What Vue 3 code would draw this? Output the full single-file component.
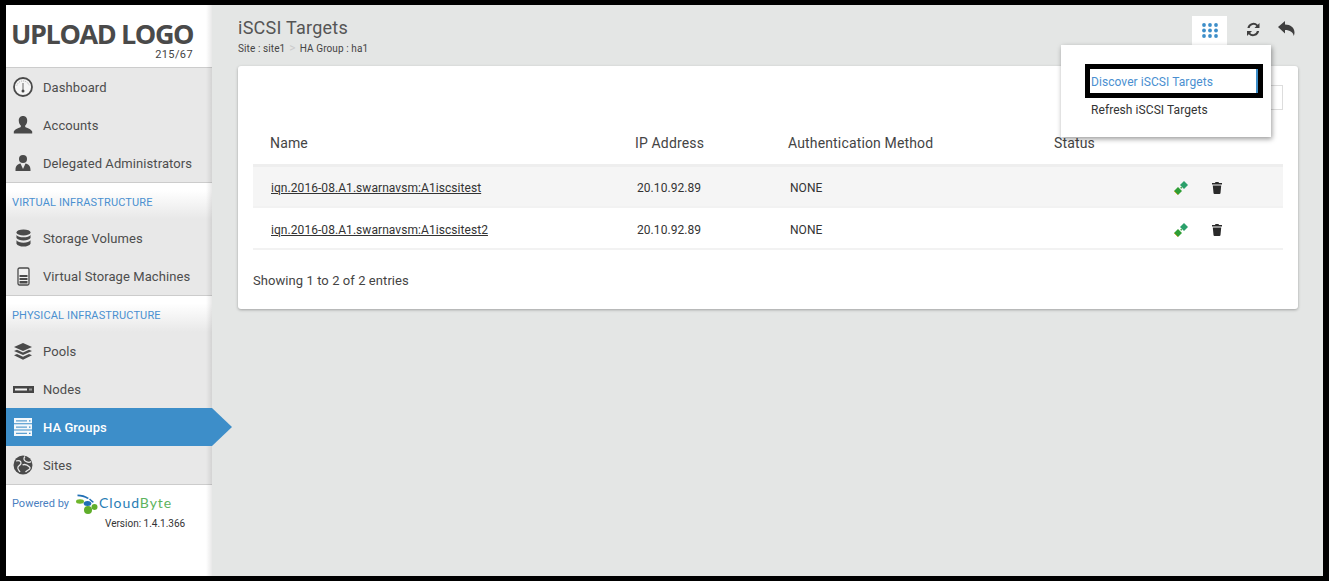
<script setup>
const rows = [
  { name: 'iqn.2016-08.A1.swarnavsm:A1iscsitest', ip: '20.10.92.89', auth: 'NONE' },
  { name: 'iqn.2016-08.A1.swarnavsm:A1iscsitest2', ip: '20.10.92.89', auth: 'NONE' },
]
</script>

<template>
  <div class="frame">
    <aside class="side">
      <div class="logo">
        <div class="logo-t">UPLOAD LOGO</div>
        <div class="logo-s">215/67</div>
      </div>
      <nav class="group first">
        <a class="item"><span class="ic"><svg width="22" height="22" viewBox="0 0 22 22"><circle cx="11" cy="11" r="9" fill="#f6f6f6" stroke="#4a4a4a" stroke-width="1.800"/><path d="M11 7v7" stroke="#666" stroke-width="1"/><circle cx="11" cy="15" r="1.500" fill="#4a4a4a"/><path d="M4.800 9.500A6.500 6.500 0 0 1 17.200 9.500" fill="none" stroke="#aaa" stroke-width="1" stroke-dasharray="1 1"/></svg></span>Dashboard</a>
        <a class="item"><span class="ic"><svg width="20" height="20" viewBox="0 0 20 20"><path d="M10 1c3 0 4.400 2.200 4.200 5-.1 2-1 3.500-2 4.500v1.500c2 1 6 2 7 4.500v2H.8v-2c1-2.500 5-3.500 7-4.500v-1.500c-1-1-1.900-2.500-2-4.500C5.600 3.200 7 1 10 1z" fill="#4a4a4a"/></svg></span>Accounts</a>
        <a class="item"><span class="ic"><svg width="18" height="18" viewBox="0 0 18 18"><circle cx="9" cy="5" r="4" fill="#4a4a4a"/><path d="M1.500 16c0-4 2-6 5-6.500L9 15l2.500-5.500c3 .5 5 2.500 5 6.500v1h-15z" fill="#4a4a4a"/></svg></span>Delegated Administrators</a>
      </nav>
      <div class="heading">VIRTUAL INFRASTRUCTURE</div>
      <nav class="group">
        <a class="item"><span class="ic"><svg width="15" height="18" viewBox="0 0 16 19"><ellipse cx="8" cy="3.500" rx="7.500" ry="3.200" fill="#4a4a4a"/><path d="M.5 6.200c1 1.800 4 2.600 7.500 2.600s6.500-.8 7.500-2.600v3.300c-1 1.800-4 2.600-7.500 2.600s-6.500-.8-7.500-2.600z" fill="#4a4a4a"/><path d="M.5 12c1 1.800 4 2.600 7.500 2.600s6.500-.8 7.500-2.600v3.500c-1 2-4 3-7.500 3s-6.500-1-7.500-3z" fill="#4a4a4a"/></svg></span>Storage Volumes</a>
        <a class="item"><span class="ic"><svg width="13" height="19" viewBox="0 0 13 19"><rect x="1" y="1" width="11" height="17" rx="1.500" fill="#f0f0f0" stroke="#4a4a4a" stroke-width="1.300"/><path d="M2.500 8h8v2h-8zM2.500 11h8v2h-8zM2.500 14h8v2.500h-8z" fill="#4a4a4a"/></svg></span>Virtual Storage Machines</a>
      </nav>
      <div class="heading">PHYSICAL INFRASTRUCTURE</div>
      <nav class="group">
        <a class="item"><span class="ic"><svg width="20" height="17" viewBox="0 0 20 17"><path d="M10 0l9 4-9 4-9-4z" fill="#4a4a4a"/><path d="M4 6.800l6 2.700 6-2.700 3 1.300-9 4-9-4z" fill="#4a4a4a"/><path d="M4 11l6 2.700 6-2.700 3 1.300-9 4.500-9-4.500z" fill="#4a4a4a"/></svg></span>Pools</a>
        <a class="item"><span class="ic"><svg width="21" height="7" viewBox="0 0 21 7"><rect width="21" height="7" fill="#454545"/><rect x="2" y="2.500" width="12" height="2" fill="#f2f2f2"/><rect x="16" y="2.500" width="3" height="2" fill="#9a9a9a"/></svg></span>Nodes</a>
        <a class="item active"><span class="ic"><svg width="18" height="18" viewBox="0 0 18 18"><path d="M0 0h18v5.300H0zM0 6.300h18v5.300H0zM0 12.600h18v5.400H0z" fill="#f4f8fb"/><path d="M2 2.300h11v1.200H2zM2 8.500h11v1.200H2zM2 14.800h11v1.200H2z" fill="#5d9fd0"/><path d="M15 2.300h1.500v1.200H15zM15 8.500h1.500v1.200H15zM15 14.800h1.500v1.200H15z" fill="#3d8ec9"/></svg></span>HA Groups</a>
        <a class="item"><span class="ic"><svg width="20" height="20" viewBox="0 0 20 20"><circle cx="10" cy="10" r="9.500" fill="#4a4a4a"/><path d="M3 6c3-1 5 0 5 2s-2 2-3 4 1 3 2 5M12 1.500c-2 2-1 4 1 5s4 1 5 0M9.500 10c2-1 5 0 7 2s-2 3-4 5" fill="none" stroke="#e8e8e8" stroke-width="1.300"/></svg></span>Sites</a>
      </nav>
      <footer class="foot">
        <div class="powered">
          <span class="pw">Powered by</span>
          <svg class="cb-mark" width="22" height="20" viewBox="0 0 22 20">
            <ellipse cx="4" cy="7.500" rx="4" ry="2.200" fill="#6fb62c"/>
            <path d="M1.500 0.500c4 0 8 1 11.500 3.500L11.500 5C8.500 3.200 5 2.200 1.500 2.200z" fill="#1f6fb5"/>
            <ellipse cx="11.500" cy="9.500" rx="3.800" ry="2.500" fill="#1f6fb5"/>
            <path d="M14 4.500l4 3.500-1.500.8-3.500-3.300z" fill="#1f6fb5"/>
            <circle cx="18.500" cy="13" r="3" fill="#5fae2a"/>
            <circle cx="12" cy="16" r="4" fill="#5fae2a"/>
          </svg>
          <span class="cb"><span class="cb-a">Cloud</span><span class="cb-b">Byte</span></span>
        </div>
        <div class="ver">Version: 1.4.1.366</div>
      </footer>
    </aside>

    <main class="main">
      <header class="top">
        <div>
          <h1 class="title">iSCSI Targets</h1>
          <div class="crumb">Site : site1<span class="sep">&gt;</span>HA Group : ha1</div>
        </div>
        <div class="tools">
          <div class="grid-btn">
            <svg width="16" height="15" viewBox="0 0 16 15" fill="#3d8ec9">
              <circle cx="2" cy="2" r="1.900"/><circle cx="8" cy="2" r="1.900"/><circle cx="14" cy="2" r="1.900"/>
              <circle cx="2" cy="7.500" r="1.900"/><circle cx="8" cy="7.500" r="1.900"/><circle cx="14" cy="7.500" r="1.900"/>
              <circle cx="2" cy="13" r="1.900"/><circle cx="8" cy="13" r="1.900"/><circle cx="14" cy="13" r="1.900"/>
            </svg>
          </div>
          <svg class="refresh" width="15" height="15" viewBox="0 0 15 15" fill="#3f3f3f">
            <path d="M13.500 1v5h-5l1.900-1.900A4 4 0 0 0 3.600 6H1.400a6.100 6.100 0 0 1 10.400-3.300z"/>
            <path d="M1 14V9h5l-1.900 1.900A4 4 0 0 0 10.900 9h2.200a6.100 6.100 0 0 1-10.400 3.300z"/>
          </svg>
          <svg class="back" width="17" height="15" viewBox="0 0 17 15" fill="#3f3f3f">
            <path d="M7 0v3.500c5.500 0 9.500 3 9.500 8 0 1.200-.3 2.400-.7 3.500-.5-3.500-3.800-6-8.800-6v3.500L0 6z"/>
          </svg>
        </div>
      </header>

      <section class="card">
        <div class="search"></div>
        <div class="row head">
          <div class="c1">Name</div><div>IP Address</div><div>Authentication Method</div><div>Status</div>
        </div>
        <div v-for="(r, i) in rows" :key="r.name" class="row body" :class="{ odd: i === 0 }">
          <div class="cell c1"><a class="lnk">{{ r.name }}</a></div>
          <div class="cell">{{ r.ip }}</div>
          <div class="cell">{{ r.auth }}</div>
          <div></div>
          <div class="acts">
            <svg width="14" height="14" viewBox="0 0 14 14">
              <path d="M0 10l4-4 4 4-4 4z" fill="#2f9e35"/>
              <path d="M6 4l4-4 4 4-4 4z" fill="#2aa06a"/>
              <path d="M6.200 6.800l1-1 1 1-1 1z" fill="#2f9e35"/>
              <path d="M0 10l4 4" stroke="#c9a227" stroke-width=".8"/>
            </svg>
            <svg width="10" height="12" viewBox="0 0 10 12" fill="#2a2a2a"><path d="M3.500 0h3l.5 1h3v1.500H0V1h3zM.8 3.500h8.400l-.7 7.500c-.1.600-.4 1-1 1H2.500c-.6 0-.9-.4-1-1z"/></svg>
          </div>
        </div>
        <div class="info">Showing 1 to 2 of 2 entries</div>
      </section>

      <div class="menu">
        <a class="mi hl"><span>Discover iSCSI Targets</span></a>
        <a class="mi">Refresh iSCSI Targets</a>
      </div>
    </main>
  </div>
</template>

<style>
html, body { margin: 0; background: #000; }
</style>

<style scoped>
.frame {
  width: 1329px; height: 581px; box-sizing: border-box;
  border: solid #000; border-width: 5px 6px 5px 6px;
  display: flex; background: #e4e6e5; overflow: hidden;
  font-family: Roboto, "Liberation Sans", sans-serif;
  color: #444;
}
.side {
  width: 206px; flex: none; background: #fff; display: flex; flex-direction: column;
  position: relative; z-index: 1;
}
.side::after {
  content: ""; position: absolute; top: 0; bottom: 0; right: 0; width: 6px;
  background: linear-gradient(90deg, rgba(0,0,0,0), rgba(0,0,0,.09));
  pointer-events: none;
}
.logo { height: 63px; box-sizing: border-box; padding: 14px 0 0 5px; border-bottom: 1px solid #ccc; }
.logo-t { font: 700 27px/30px "Open Sans", sans-serif; color: #4a4a4a; letter-spacing: -1.4px; white-space: nowrap; }
.logo-s { font-size: 11px; line-height: 12px; text-align: right; padding-right: 19px; color: #444; letter-spacing: .4px; }
.group { background: #e8e8e8; border-bottom: 1px solid #ccc; }
.item {
  height: 38px; display: flex; align-items: center; font-size: 13px; color: #4d4d4d;
  position: relative; letter-spacing: .08px;
}
.ic { width: 37px; flex: none; display: flex; justify-content: center; padding-right: 3px; box-sizing: border-box; }
.active { background: #3d8ec9; color: #fff; font-weight: 500; z-index: 1; }
.active::after {
  content: ""; position: absolute; left: 100%; top: 0;
  border-left: 20px solid #3d8ec9; border-top: 19px solid transparent; border-bottom: 19px solid transparent;
}
.heading {
  height: 36px; padding: 13px 0 0 6px; box-sizing: border-box;
  font-size: 11px; line-height: 14px; color: #4a90d0; letter-spacing: .15px;
  background: linear-gradient(#fff 20%, #e8e8e8);
}
.foot { flex: 1; background: #fff; font-size: 10px; color: #333; }
.powered { display: flex; align-items: center; padding: 9px 0 0 6px; height: 27px; box-sizing: border-box; }
.pw { color: #4a80c0; font-size: 11px; margin-right: 7px; white-space: nowrap; }
.cb-mark { flex: none; margin-top: 2px; margin-right: 1px; }
.cb { font: 400 14px/16px Lato, sans-serif; letter-spacing: .95px; white-space: nowrap; }
.cb-a { color: #2a7db5; }
.cb-b { color: #5db35d; }
.ver { padding: 5px 0 0 99px; line-height: 14px; }

.main { flex: 1; position: relative; min-width: 0; padding: 0 25px 0 26px; }
.top { height: 61px; display: flex; justify-content: space-between; position: relative; }
.title { margin: 0; padding-top: 12px; font-size: 18px; line-height: 21px; font-weight: 400; color: #555; letter-spacing: .25px; }
.crumb { font-size: 10px; line-height: 13px; margin-top: 4px; color: #444; letter-spacing: .1px; }
.sep { color: #ccc; margin: 0 4px; font-size: 12px; }
.tools { display: flex; align-items: flex-start; position: relative; width: 106px; }
.grid-btn { margin-top: 11px; width: 35px; height: 29px; background: #fff; display: flex; align-items: center; justify-content: center; box-sizing: border-box; padding-bottom: 1px; }
.refresh { margin: 17px 0 0 19px; }
.back { margin: 16px 0 0 17px; }

.card {
  background: #fff; border-radius: 3px; height: 243px; box-sizing: border-box; padding: 56px 15px 0;
  box-shadow: 0 1px 3px rgba(0,0,0,.3); position: relative;
}
.search { position: absolute; right: 15px; top: 19px; width: 60px; height: 25px; border: 1px solid #ddd; box-sizing: border-box; }
.row { display: grid; grid-template-columns: 382px 153px 266px 111px 1fr; }
.head { height: 42px; align-items: center; font-size: 14px; color: #444; border-bottom: 3px solid #eee; letter-spacing: .15px; }
.head .c1 { padding-left: 17px; }
.body { height: 42px; padding-top: 4px; align-items: center; font-size: 12px; color: #333; border-bottom: 2px solid #f2f2f2; box-sizing: border-box; }
.odd { background: #f5f5f5; height: 41px; padding-top: 3px; }
.cell { padding-left: 2px; letter-spacing: .06px; }
.cell.c1 { padding-left: 18px; }
.lnk { text-decoration: underline; color: #333; }
.acts { display: flex; align-items: center; padding-left: 9px; }
.acts svg:first-child { margin-right: 24px; }
.info { margin-top: 23px; font-size: 13px; line-height: 16px; color: #444; letter-spacing: .07px; }

.menu {
  position: absolute; left: 849px; top: 40px; width: 210px; height: 92px; box-sizing: border-box;
  background: #fff; box-shadow: 1px 2px 5px rgba(0,0,0,.4); padding-top: 19px; z-index: 2;
}
.mi { display: block; margin-left: 24px; width: 178px; box-sizing: border-box; font-size: 12px; color: #333; letter-spacing: .07px; padding-left: 6px; height: 26px; line-height: 26px; }
.hl { height: 34px; line-height: 26px; border: 5px solid #000; padding-left: 1px; color: #4a8fd0; margin-bottom: -1px; }
.hl span { display: block; width: 100%; border-right: 2px solid #3d8ec9; height: 24px; box-sizing: border-box; }
</style>
